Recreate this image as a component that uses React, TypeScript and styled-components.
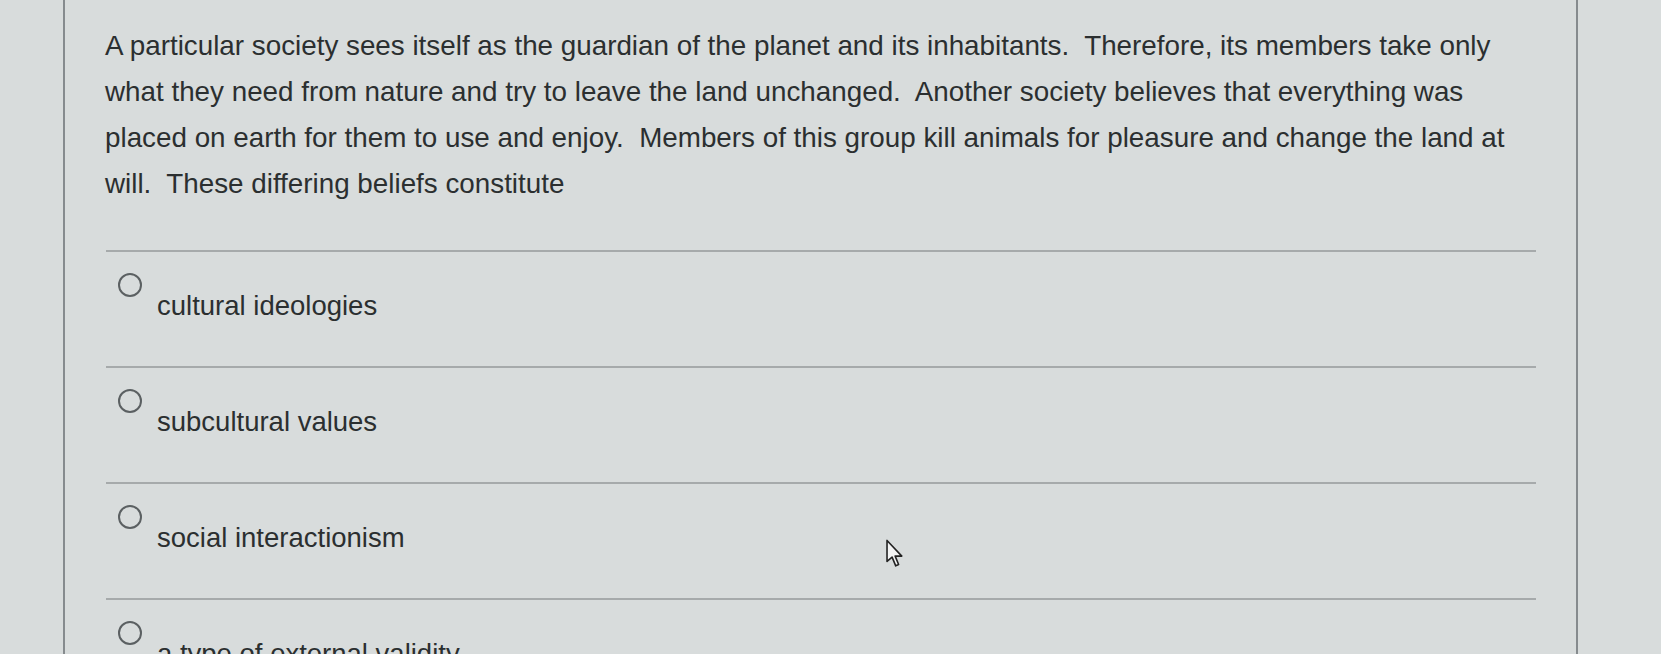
import React from 'react';
import styled, { createGlobalStyle } from 'styled-components';

const GlobalStyle = createGlobalStyle`
  html, body {
    margin: 0;
    padding: 0;
    background: #d8dcdc;
    overflow: hidden;
  }
`;

const Page = styled.div`
  position: relative;
  height: 654px;
  padding-left: 63px;
  font-family: 'Liberation Sans', Arial, sans-serif;
  color: #2b2f30;
`;

const Card = styled.div`
  box-sizing: border-box;
  width: 1515px;
  height: 100%;
  padding: 23px 40px 0;
  border-left: 2px solid #868b8e;
  border-right: 2px solid #868b8e;
`;

const Question = styled.p`
  margin: 0 0 43px;
  font-size: 27.8px;
  line-height: 46px;
  white-space: pre;
`;

const OptionList = styled.div`
  display: flex;
  flex-direction: column;
  margin-left: 1px;
`;

const OptionRow = styled.label`
  display: flex;
  align-items: flex-start;
  height: 114px;
  border-top: 2px solid #a6aaab;
  cursor: pointer;
`;

const Radio = styled.span`
  flex: none;
  box-sizing: border-box;
  width: 24px;
  height: 24px;
  margin: 21px 0 0 12px;
  border: 2.5px solid #5b6062;
  border-radius: 50%;
`;

const OptionText = styled.span`
  margin: 39px 0 0 15px;
  font-size: 27.5px;
  line-height: 30px;
`;

const Pointer = styled.svg`
  position: absolute;
  left: 885px;
  top: 539px;
`;

const question = [
  'A particular society sees itself as the guardian of the planet and its inhabitants.  Therefore, its members take only',
  'what they need from nature and try to leave the land unchanged.  Another society believes that everything was',
  'placed on earth for them to use and enjoy.  Members of this group kill animals for pleasure and change the land at',
  'will.  These differing beliefs constitute',
];

const options = [
  'cultural ideologies',
  'subcultural values',
  'social interactionism',
  'a type of external validity',
];

export default function App() {
  return (
    <>
      <GlobalStyle />
      <Page>
        <Card>
          <Question>
            {question.map((line, i) => (
              <React.Fragment key={i}>
                {line}
                {i < question.length - 1 && <br />}
              </React.Fragment>
            ))}
          </Question>
          <OptionList>
            {options.map((opt) => (
              <OptionRow key={opt}>
                <Radio />
                <OptionText>{opt}</OptionText>
              </OptionRow>
            ))}
          </OptionList>
        </Card>
        <Pointer width="20" height="29" viewBox="0 0 13 20">
          <path
            d="M1 1 L1 15.5 L4.5 12.5 L7 18.5 L9 17.6 L6.6 11.8 L11.2 11.8 Z"
            fill="#f4f5f5"
            stroke="#222"
            strokeWidth="1.1"
            strokeLinejoin="round"
          />
        </Pointer>
      </Page>
    </>
  );
}
